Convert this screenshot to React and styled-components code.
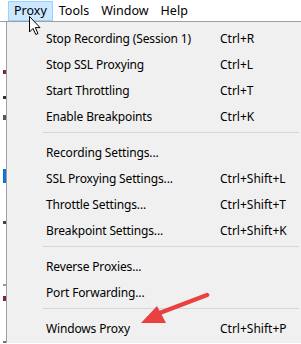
import React from "react";
import styled, { createGlobalStyle } from "styled-components";

const Global = createGlobalStyle`
  html, body { margin: 0; padding: 0; background: #fff; }
  body { font-family: "Noto Sans", "Open Sans", sans-serif; }
`;

const Screen = styled.div`
  position: relative;
  width: 301px;
  height: 344px;
  overflow: hidden;
  background: #fff;
  font-family: "Noto Sans", sans-serif;
  font-size: 12px;
  color: #000;
`;

const MenuBar = styled.div`
  display: flex;
  align-items: stretch;
  height: 22px;
  padding: 1px 0 0 8px;
  box-sizing: border-box;
  border-bottom: 1px solid #a0a0a0;
  background: #fff;
`;

const BarItem = styled.div`
  display: flex;
  align-items: center;
  padding: 0 ${(p) => (p.$active ? 5 : 4)}px 1px;
  margin-right: ${(p) => (p.$active ? 1 : 2)}px;
  height: 20px;
  box-sizing: border-box;
  background: ${(p) => (p.$active ? "#cce8ff" : "transparent")};
  border: 1px solid ${(p) => (p.$active ? "#99d1ff" : "transparent")};
  font-size: 12.5px;
`;

const Body = styled.div`
  display: flex;
  height: 321px;
`;

const LeftStrip = styled.div`
  width: 6px;
  display: flex;
  flex-direction: column;
  background: #fff;
`;

const Mark = styled.div`
  height: ${(p) => p.$h}px;
  margin-top: ${(p) => p.$t}px;
  margin-left: 3px;
  width: 3px;
  background: ${(p) => p.$c};
`;

const Menu = styled.div`
  flex: 1;
  background: #f0f0f0;
  border-left: 1px solid #a0a0a0;
  padding-top: 3px;
  display: flex;
  flex-direction: column;
`;

const Row = styled.div`
  display: grid;
  grid-template-columns: 174px 1fr;
  align-items: center;
  height: 26px;
  padding-left: 39px;
  white-space: nowrap;
`;

const Label = styled.span`
  letter-spacing: -0.15px;
`;

const Separator = styled.div`
  height: 1px;
  background: #d7d7d7;
  margin: 3px 2px 6px 36px;
`;

const Overlay = styled.svg`
  position: absolute;
  pointer-events: none;
`;

const groups = [
  [
    ["Stop Recording (Session 1)", "Ctrl+R"],
    ["Stop SSL Proxying", "Ctrl+L"],
    ["Start Throttling", "Ctrl+T"],
    ["Enable Breakpoints", "Ctrl+K"],
  ],
  [
    ["Recording Settings...", ""],
    ["SSL Proxying Settings...", "Ctrl+Shift+L"],
    ["Throttle Settings...", "Ctrl+Shift+T"],
    ["Breakpoint Settings...", "Ctrl+Shift+K"],
  ],
  [
    ["Reverse Proxies...", ""],
    ["Port Forwarding...", ""],
  ],
  [["Windows Proxy", "Ctrl+Shift+P"]],
];

export default function App() {
  return (
    <>
      <Global />
      <Screen>
        <MenuBar>
          <BarItem $active>Proxy</BarItem>
          <BarItem>Tools</BarItem>
          <BarItem>Window</BarItem>
          <BarItem>Help</BarItem>
        </MenuBar>
        <Body>
          <LeftStrip>
            <Mark $t={48} $h={5} $c="#7a2a3a" />
            <Mark $t={22} $h={4} $c="#333" />
            <Mark $t={16} $h={8} $c="#556" />
            <Mark $t={49} $h={18} $c="#1473d0" />
            <Mark $t={38} $h={5} $c="#444" />
            <Mark $t={60} $h={3} $c="#999" />
            <Mark $t={10} $h={6} $c="#7a2a3a" />
            <Mark $t={40} $h={3} $c="#777" />
          </LeftStrip>
          <Menu>
            {groups.map((g, gi) => (
              <React.Fragment key={gi}>
                {gi > 0 && <Separator />}
                {g.map(([label, key]) => (
                  <Row key={label}>
                    <Label>{label}</Label>
                    <span>{key}</span>
                  </Row>
                ))}
              </React.Fragment>
            ))}
          </Menu>
        </Body>
        <Overlay width="14" height="20" viewBox="0 0 14 20" style={{ left: 29, top: 16 }}>
          <path
            d="M0.5 0.5 L0.5 16 L4 12.5 L6.8 18.5 L9 17.5 L6.3 11.6 L11 11.6 Z"
            fill="#fff"
            stroke="#000"
            strokeWidth="1"
            strokeLinejoin="miter"
          />
        </Overlay>
        <Overlay width="80" height="40" viewBox="0 0 80 40" style={{ left: 135, top: 290 }}>
          <line x1="72" y1="5" x2="22" y2="24" stroke="#e8413f" strokeWidth="4.5" strokeLinecap="round" />
          <polygon points="6,33 22,16 31,33" fill="#e8413f" />
        </Overlay>
      </Screen>
    </>
  );
}
